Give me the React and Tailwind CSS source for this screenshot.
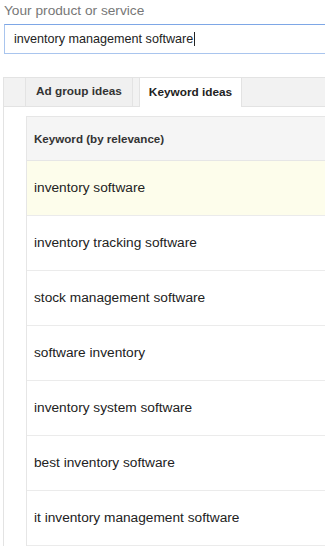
const rows = [
    'inventory software',
    'inventory tracking software',
    'stock management software',
    'software inventory',
    'inventory system software',
    'best inventory software',
    'it inventory management software',
];

const App = () => {
    return (
        <div className="w-[325px] h-[551px] overflow-hidden bg-white font-['Liberation_Sans',Arial,sans-serif]">
            {/* product input */}
            <div className="pl-[4px] pt-[1px] text-[13.7px] leading-[20px] text-[#777]">Your product or service</div>
            <div className="ml-[4px] mt-[3px] h-[30px] w-[330px] border border-[#a9c5ee] border-t-[#7ea7e6] bg-white pl-[9px] flex items-center text-[12.6px] text-[#222]">
                inventory management software<span className="ml-[1px] inline-block h-[14px] w-px bg-[#222]"></span>
            </div>

            {/* tabs */}
            <div className="mt-[23px] ml-[3px] flex h-[30px] border-t border-b border-l border-[#e3e3e3] bg-[#f2f2f2]">
                <div className="w-[22px] border-r border-[#e3e3e3]"></div>
                <div className="flex w-[107px] items-center justify-center border-r border-[#e3e3e3] bg-[#f0f0f0] text-[11.8px] font-bold text-[#333]">
                    Ad group ideas
                </div>
                <div className="ml-[6px] -mb-px flex w-[103px] items-center justify-center border-l border-r border-[#e3e3e3] bg-white text-[11.8px] font-bold text-[#222]">
                    Keyword ideas
                </div>
                <div className="flex-1"></div>
            </div>

            {/* table */}
            <div className="ml-[3px] border-l border-[#e3e3e3] pl-[22px] pt-[9px]">
                <div className="border-l border-t border-[#e6e6e6]">
                    <div className="flex h-[44px] items-center border-b border-[#e6e6e6] bg-[#f5f5f5] pl-[7px] text-[11.6px] font-bold text-[#333]">
                        Keyword (by relevance)
                    </div>
                    {rows.map((kw, i) => (
                        <div
                            key={kw}
                            className={`flex h-[55px] items-center border-b border-[#ebebeb] pl-[7px] text-[13.7px] text-[#222] ${
                                i === 0 ? 'bg-[#fdfdeb]' : 'bg-white'
                            }`}
                        >
                            {kw}
                        </div>
                    ))}
                </div>
            </div>
        </div>
    );
};

export default App;
